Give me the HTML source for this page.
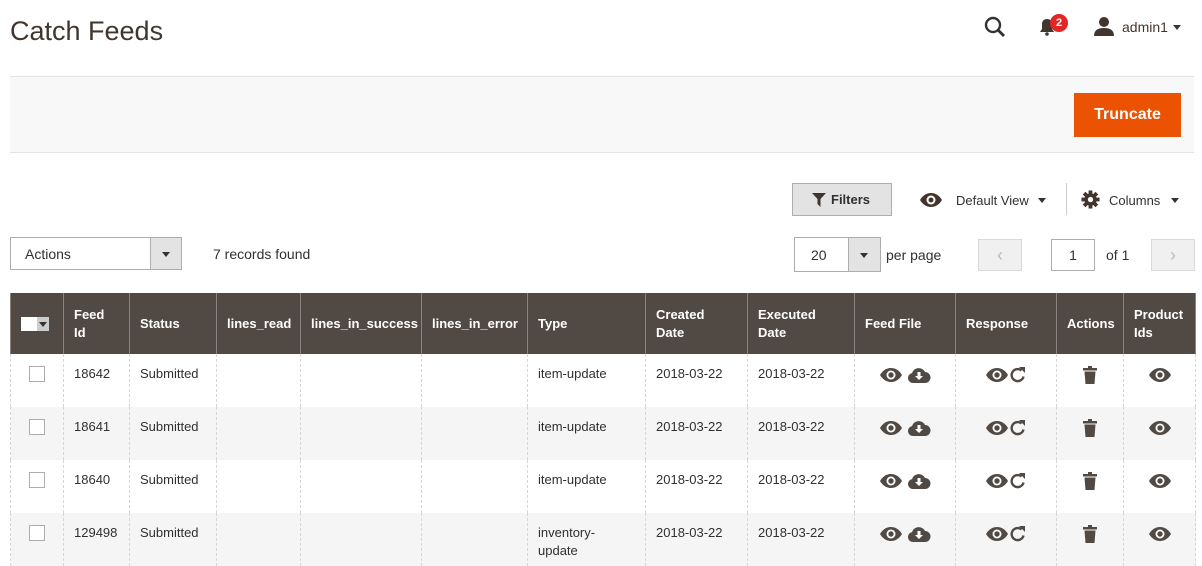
<!DOCTYPE html>
<html><head><meta charset="utf-8">
<style>
*{box-sizing:border-box;margin:0;padding:0}
body{width:1202px;height:561px;overflow:hidden;background:#fff;font-family:"Liberation Sans",sans-serif;color:#303030;font-size:13px;position:relative}
.abs{position:absolute}
h1{position:absolute;left:10px;top:16px;font-size:27px;font-weight:normal;color:#41362f}
.bar{position:absolute;left:10px;top:76px;width:1184px;height:77px;background:#f8f8f8;border-top:1px solid #e3e3e3;border-bottom:1px solid #e3e3e3}
.trunc{position:absolute;left:1074px;top:93px;width:107px;height:44px;background:#eb5202;color:#fff;font-size:16px;font-weight:bold;text-align:center;line-height:44px}
.btn{border:1px solid #adadad}
table{position:absolute;left:10px;top:293px;width:1185px;border-collapse:collapse;table-layout:fixed}
th{background:#514943;color:#fff;font-weight:bold;text-align:left;padding:0 10px;height:61px;border-left:1px solid #8a837f;border-right:1px solid #8a837f;font-size:13px;line-height:18px;vertical-align:middle}
td{height:53px;padding:0 10px;vertical-align:top;padding-top:11px;border-left:1px dashed #d6d6d6;border-right:1px dashed #d6d6d6;line-height:18px}
tr:nth-child(odd) td{background:#f5f5f5}
.c{text-align:center}
td svg{vertical-align:middle}
.cb{display:inline-block;width:16px;height:16px;border:1px solid #adadad;background:#fff;margin-left:8px;margin-top:1px}
</style></head><body>
<h1>Catch Feeds</h1>
<svg class="abs" style="left:984px;top:16px" width="22" height="22" viewBox="0 0 22 22"><circle cx="9" cy="9" r="7" fill="none" stroke="#333" stroke-width="2.4"/><path d="M14 14l6 6" stroke="#333" stroke-width="2.8"/></svg>
<svg class="abs" style="left:1039px;top:18px" width="16" height="18" viewBox="0 0 16 18"><path d="M8 1c-3 0-5 2-5 5v5l-2 3h14l-2-3V6c0-3-2-5-5-5z" fill="#41362f"/><circle cx="8" cy="16" r="1.8" fill="#41362f"/></svg>
<div class="abs" style="left:1050px;top:14px;width:18px;height:18px;border-radius:50%;background:#e22626;color:#fff;font-size:11px;font-weight:bold;text-align:center;line-height:18px">2</div>
<svg class="abs" style="left:1093px;top:16px" width="22" height="20" viewBox="0 0 22 20"><circle cx="11" cy="6" r="5" fill="#41362f"/><path d="M1 20c0-6 4-8 10-8s10 2 10 8z" fill="#41362f"/></svg>
<div class="abs" style="left:1122px;top:19px;font-size:14px;color:#41362f">admin1</div>
<div class="abs" style="left:1173px;top:25px;border:4px solid transparent;border-top:5px solid #41362f"></div>
<div class="bar"></div>
<div class="trunc">Truncate</div>

<div class="abs btn" style="left:792px;top:183px;width:100px;height:33px;background:#e3e3e3;font-size:13px;line-height:31px;padding-left:38px;color:#303030;font-weight:bold">Filters</div>
<svg class="abs" style="left:812px;top:193px" width="14" height="14" viewBox="0 0 14 14"><path d="M0 0h14L8.5 6v8L5.5 11V6z" fill="#41362f"/></svg>
<svg class="abs" style="left:919px;top:192px" width="24" height="16" viewBox="0 0 24 16"><path d="M1 8C4 3 8 1 12 1s8 2 11 7c-3 5-7 7-11 7S4 13 1 8z" fill="#41362f"/><circle cx="12" cy="8" r="4.5" fill="#fff"/><circle cx="12" cy="8" r="2.5" fill="#41362f"/></svg>
<div class="abs" style="left:956px;top:193px;font-size:13px">Default View</div>
<div class="abs" style="left:1038px;top:198px;border:4px solid transparent;border-top:5px solid #333"></div>
<div class="abs" style="left:1066px;top:183px;width:1px;height:32px;background:#ccc"></div>
<svg class="abs" style="left:1081px;top:190px" width="19" height="19" viewBox="0 0 20 20"><g fill="#41362f"><circle cx="10" cy="10" r="6.5"/><rect x="8" y="0.5" width="4" height="19"/><rect x="0.5" y="8" width="19" height="4"/><rect x="8" y="0.5" width="4" height="19" transform="rotate(45 10 10)"/><rect x="8" y="0.5" width="4" height="19" transform="rotate(-45 10 10)"/></g><circle cx="10" cy="10" r="2.8" fill="#fff"/></svg>
<div class="abs" style="left:1109px;top:193px;font-size:13px">Columns</div>
<div class="abs" style="left:1171px;top:198px;border:4px solid transparent;border-top:5px solid #333"></div>

<div class="abs btn" style="left:10px;top:237px;width:172px;height:33px;background:#fff"></div>
<div class="abs" style="left:150px;top:238px;width:31px;height:31px;background:#e3e3e3;border-left:1px solid #adadad"></div>
<div class="abs" style="left:162px;top:252px;border:4px solid transparent;border-top:5px solid #333"></div>
<div class="abs" style="left:25px;top:246px;font-size:14px">Actions</div>
<div class="abs" style="left:213px;top:246px;font-size:14px">7 records found</div>

<div class="abs btn" style="left:794px;top:237px;width:87px;height:35px;background:#fff"></div>
<div class="abs" style="left:848px;top:238px;width:32px;height:33px;background:#e3e3e3;border-left:1px solid #adadad"></div>
<div class="abs" style="left:860px;top:253px;border:4px solid transparent;border-top:5px solid #333"></div>
<div class="abs" style="left:811px;top:247px;font-size:14px">20</div>
<div class="abs" style="left:886px;top:247px;font-size:14px">per page</div>
<div class="abs" style="left:978px;top:239px;width:44px;height:32px;background:#f0f0f0;border:1px solid #d9d9d9;color:#bbb;text-align:center;line-height:30px;font-size:18px">&lsaquo;</div>
<div class="abs btn" style="left:1051px;top:239px;width:44px;height:32px;background:#fff;text-align:center;line-height:30px;font-size:14px">1</div>
<div class="abs" style="left:1106px;top:247px;font-size:14px">of 1</div>
<div class="abs" style="left:1151px;top:239px;width:44px;height:32px;background:#f0f0f0;border:1px solid #d9d9d9;color:#bbb;text-align:center;line-height:30px;font-size:18px">&rsaquo;</div>

<svg width="0" height="0" style="position:absolute"><defs>
<symbol id="eye" viewBox="0 0 24 16"><path d="M1 8C4 3 8 1 12 1s8 2 11 7c-3 5-7 7-11 7S4 13 1 8z" fill="#514943"/><circle cx="12" cy="8" r="4.5" fill="#fff"/><circle cx="12" cy="8" r="2.7" fill="#514943"/></symbol>
<symbol id="cloud" viewBox="0 0 24 16"><path d="M6 16a5 5 0 0 1-1-9.9A7 7 0 0 1 18 5a5.5 5.5 0 0 1 0 11z" fill="#514943"/><path d="M10.5 5h3v4h2.5L12 13 8 9h2.5z" fill="#fff"/></symbol>
<symbol id="ref" viewBox="0 0 18 18"><path d="M14.5 10.5A6 6 0 1 1 12.5 4.5" fill="none" stroke="#514943" stroke-width="2.4"/><path d="M10 1h6v6z" fill="#514943"/></symbol>
<symbol id="trash" viewBox="0 0 14 18"><rect x="0" y="2" width="14" height="2.5" fill="#514943"/><rect x="5" y="0" width="4" height="2" fill="#514943"/><path d="M1.5 5.5h11L11.5 18h-9z" fill="#514943"/></symbol>
</defs></svg>

<table>
<colgroup><col style="width:53px"><col style="width:66px"><col style="width:87px"><col style="width:84px"><col style="width:121px"><col style="width:106px"><col style="width:118px"><col style="width:102px"><col style="width:107px"><col style="width:101px"><col style="width:101px"><col style="width:67px"><col style="width:72px"></colgroup>
<tr><th style="padding:0 10px"><span style="display:inline-block;width:16px;height:14px;background:#fff;vertical-align:middle"></span><span style="display:inline-block;width:12px;height:14px;background:#ccc;vertical-align:middle;position:relative"><span style="position:absolute;left:2px;top:5px;border:4px solid transparent;border-top:5px solid #333"></span></span></th><th>Feed<br>Id</th><th>Status</th><th>lines_read</th><th>lines_in_success</th><th>lines_in_error</th><th>Type</th><th>Created<br>Date</th><th>Executed<br>Date</th><th>Feed File</th><th>Response</th><th>Actions</th><th>Product<br>Ids</th></tr>
<tr><td><span class="cb"></span></td><td>18642</td><td>Submitted</td><td></td><td></td><td></td><td>item-update</td><td>2018-03-22</td><td>2018-03-22</td><td class="c"><svg width="24" height="16"><use href="#eye"/></svg> <svg width="24" height="16"><use href="#cloud"/></svg></td><td class="c"><svg width="24" height="16"><use href="#eye"/></svg><svg width="18" height="18"><use href="#ref"/></svg></td><td class="c"><svg width="14" height="18"><use href="#trash"/></svg></td><td class="c"><svg width="24" height="16"><use href="#eye"/></svg></td></tr>
<tr><td><span class="cb"></span></td><td>18641</td><td>Submitted</td><td></td><td></td><td></td><td>item-update</td><td>2018-03-22</td><td>2018-03-22</td><td class="c"><svg width="24" height="16"><use href="#eye"/></svg> <svg width="24" height="16"><use href="#cloud"/></svg></td><td class="c"><svg width="24" height="16"><use href="#eye"/></svg><svg width="18" height="18"><use href="#ref"/></svg></td><td class="c"><svg width="14" height="18"><use href="#trash"/></svg></td><td class="c"><svg width="24" height="16"><use href="#eye"/></svg></td></tr>
<tr><td><span class="cb"></span></td><td>18640</td><td>Submitted</td><td></td><td></td><td></td><td>item-update</td><td>2018-03-22</td><td>2018-03-22</td><td class="c"><svg width="24" height="16"><use href="#eye"/></svg> <svg width="24" height="16"><use href="#cloud"/></svg></td><td class="c"><svg width="24" height="16"><use href="#eye"/></svg><svg width="18" height="18"><use href="#ref"/></svg></td><td class="c"><svg width="14" height="18"><use href="#trash"/></svg></td><td class="c"><svg width="24" height="16"><use href="#eye"/></svg></td></tr>
<tr><td><span class="cb"></span></td><td>129498</td><td>Submitted</td><td></td><td></td><td></td><td>inventory-<br>update</td><td>2018-03-22</td><td>2018-03-22</td><td class="c"><svg width="24" height="16"><use href="#eye"/></svg> <svg width="24" height="16"><use href="#cloud"/></svg></td><td class="c"><svg width="24" height="16"><use href="#eye"/></svg><svg width="18" height="18"><use href="#ref"/></svg></td><td class="c"><svg width="14" height="18"><use href="#trash"/></svg></td><td class="c"><svg width="24" height="16"><use href="#eye"/></svg></td></tr>
</table>
</body></html>
